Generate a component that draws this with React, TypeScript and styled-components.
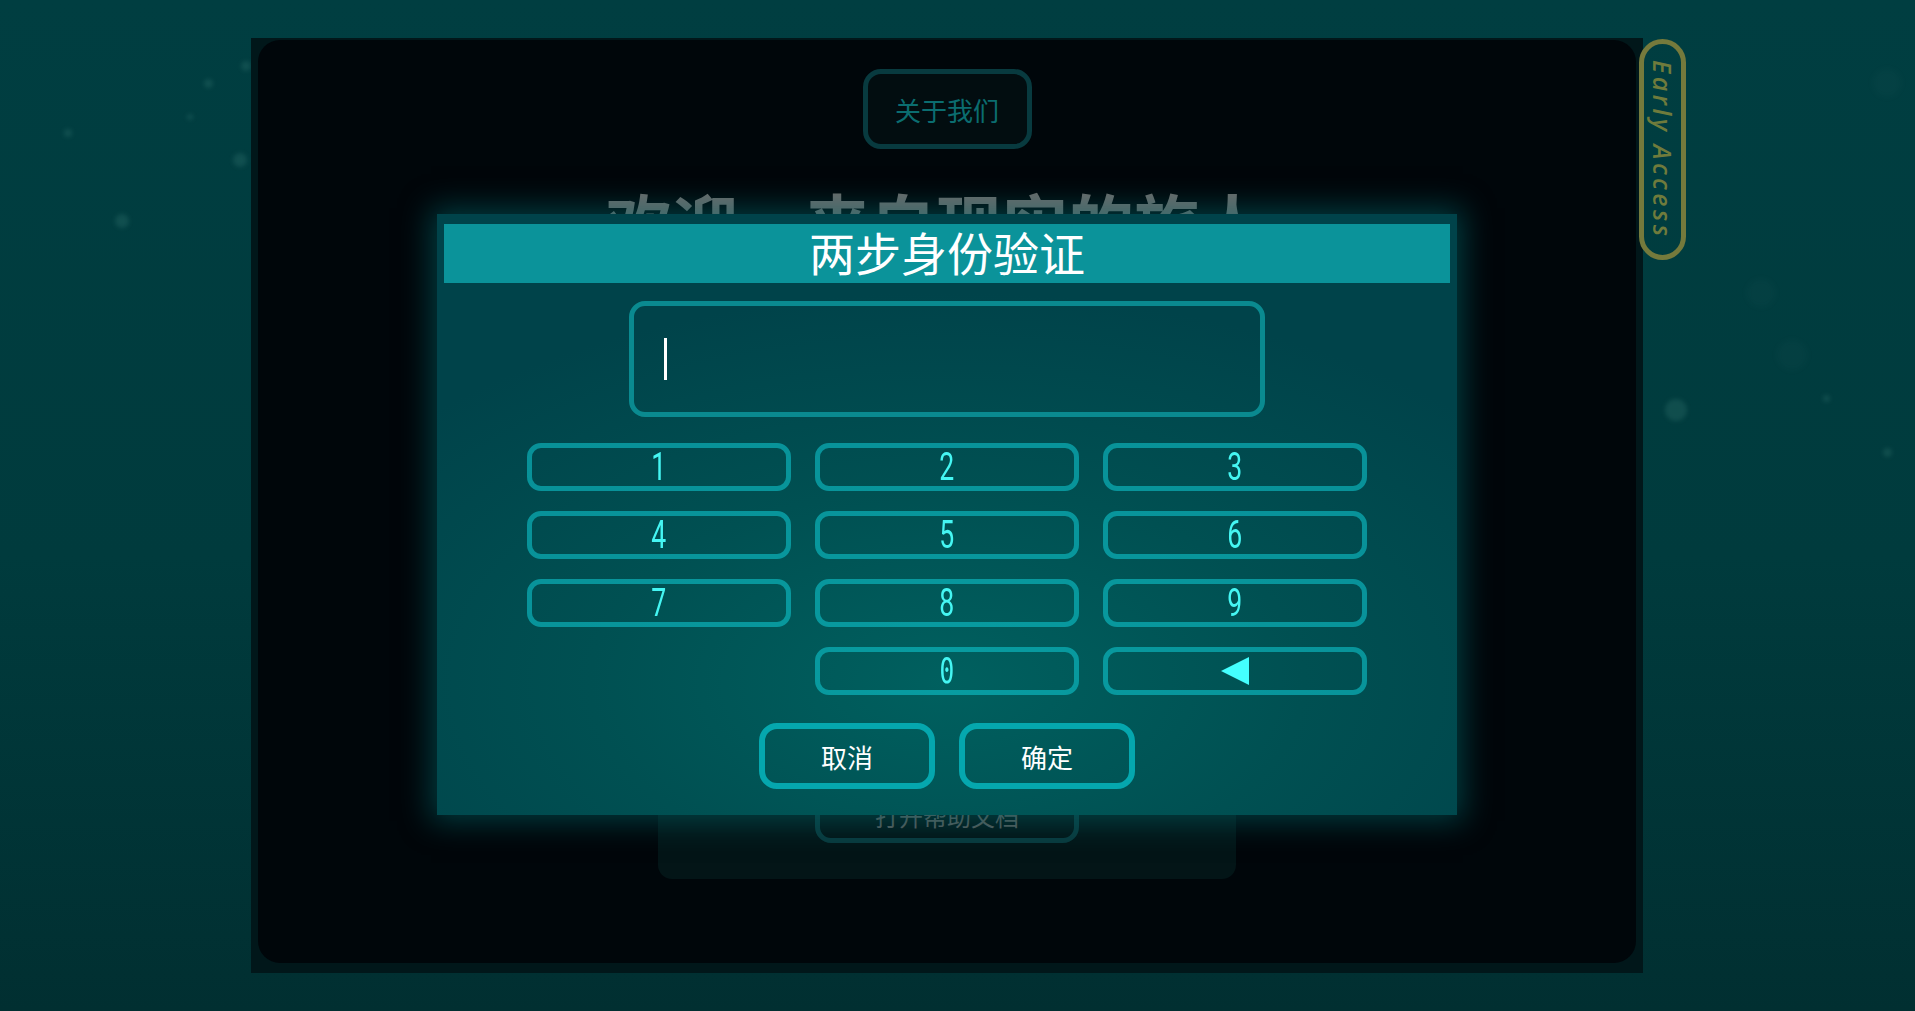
import React, { useState } from "react";
import styled, { createGlobalStyle } from "styled-components";

const GlobalStyle = createGlobalStyle`
  html, body {
    margin: 0;
    padding: 0;
    background: #003c3f;
  }
  * {
    box-sizing: border-box;
  }
`;

const CJK = `"Noto Sans CJK SC", "Noto Sans", sans-serif`;

const Page = styled.div`
  position: relative;
  width: 100vw;
  height: 100vh;
  overflow: hidden;
  display: flex;
  align-items: flex-start;
  padding: 38px 0 0 251px;
  background: linear-gradient(180deg, #003e41 0%, #003b3d 55%, #012f31 100%);
  font-family: ${CJK};
`;

const Bokeh = styled.span<{ $x: number; $y: number; $size: number; $ring?: boolean }>`
  position: absolute;
  left: ${(p) => p.$x - p.$size / 2}px;
  top: ${(p) => p.$y - p.$size / 2}px;
  width: ${(p) => p.$size}px;
  height: ${(p) => p.$size}px;
  border-radius: 50%;
  background: ${(p) => (p.$ring ? "rgba(90, 160, 150, 0.04)" : "rgba(90, 160, 150, 0.18)")};
  filter: blur(${(p) => (p.$ring ? 3 : 2)}px);
`;

const Frame = styled.div`
  position: relative;
  z-index: 1;
  width: 1392px;
  height: 935px;
  padding: 2px 7px 10px;
  background: #01171a;
  display: flex;
`;

const Inner = styled.div`
  position: relative;
  flex: 1;
  display: flex;
  flex-direction: column;
  align-items: center;
  padding-top: 29px;
  background: #00060a;
  border-radius: 22px;
`;

const AboutButton = styled.div`
  width: 169px;
  height: 80px;
  display: flex;
  align-items: center;
  justify-content: center;
  border: 5px solid #083a3f;
  border-radius: 18px;
  background: #020d10;
  color: #0b6d70;
  font-size: 26px;
`;

const Heading = styled.h1`
  margin: 39px 0 0;
  padding-right: 22px;
  font-size: 66px;
  line-height: 66px;
  font-weight: 700;
  color: #6b6b6b;
  letter-spacing: 0;
`;

const HelpPanel = styled.div`
  width: 578px;
  height: 359px;
  margin-top: 266px;
  padding-bottom: 36px;
  display: flex;
  flex-direction: column;
  justify-content: flex-end;
  align-items: center;
  background: #031517;
  border-radius: 14px;
`;

const HelpButton = styled.div`
  width: 264px;
  height: 56px;
  display: flex;
  align-items: center;
  justify-content: center;
  border: 5px solid #093a3e;
  border-radius: 16px;
  color: #595959;
  font-size: 24px;
`;

const Badge = styled.div`
  position: relative;
  z-index: 2;
  width: 47px;
  height: 221px;
  margin: 1px 0 0 -4px;
  display: flex;
  align-items: center;
  justify-content: center;
  border: 5px solid #757a3c;
  border-radius: 24px;
  writing-mode: vertical-rl;
  font-family: "Open Sans", "DejaVu Sans", sans-serif;
  font-style: italic;
  font-weight: 600;
  font-size: 25px;
  letter-spacing: 3.5px;
  color: #6f7b3c;
`;

/* dialog */

const Modal = styled.div`
  position: absolute;
  top: 174px;
  left: 179px;
  width: 1020px;
  height: 601px;
  padding: 10px 7px 0;
  display: flex;
  flex-direction: column;
  align-items: center;
  background: radial-gradient(ellipse 70% 65% at 50% 78%, #00605f 0%, #005052 50%, #00434a 100%);
  box-shadow: 0 0 28px 6px rgba(0, 105, 110, 0.55);
`;

const TitleBar = styled.div`
  align-self: stretch;
  height: 59px;
  padding-bottom: 5px;
  display: flex;
  align-items: center;
  justify-content: center;
  background: #0b939a;
  color: #ffffff;
  font-size: 46px;
  font-weight: 400;
`;

const CodeInput = styled.div`
  width: 636px;
  height: 116px;
  margin-top: 18px;
  padding-left: 30px;
  display: flex;
  align-items: center;
  border: 5px solid #0a8a90;
  border-radius: 16px;
`;

const Caret = styled.span`
  width: 3px;
  height: 42px;
  background: #ffffff;
`;

const Keypad = styled.div`
  margin-top: 26px;
  display: grid;
  grid-template-columns: repeat(3, 264px);
  grid-auto-rows: 48px;
  column-gap: 24px;
  row-gap: 20px;
`;

const Key = styled.button<{ $col?: number }>`
  grid-column: ${(p) => p.$col ?? "auto"};
  display: flex;
  align-items: center;
  justify-content: center;
  padding: 0;
  background: transparent;
  border: 5px solid rgba(14, 205, 215, 0.55);
  border-radius: 14px;
  color: #45f6f3;
  cursor: pointer;
`;

const Digit = styled.span<{ $mono?: boolean }>`
  font-family: ${(p) => (p.$mono ? `"DejaVu Sans Mono", monospace` : `Roboto, "Liberation Sans", sans-serif`)};
  font-weight: 400;
  font-size: ${(p) => (p.$mono ? 36 : 38)}px;
  line-height: 1;
  transform: scaleX(${(p) => (p.$mono ? 0.68 : 0.7)});
`;

const Actions = styled.div`
  margin-top: 28px;
  display: flex;
  gap: 24px;
`;

const ActionButton = styled.button`
  width: 176px;
  height: 66px;
  display: flex;
  align-items: center;
  justify-content: center;
  background: transparent;
  border: 6px solid #05a7ae;
  border-radius: 18px;
  color: #ffffff;
  font-family: ${CJK};
  font-size: 26px;
  font-weight: 400;
  cursor: pointer;
`;

const dots = [
  { x: 208, y: 83, size: 9 },
  { x: 190, y: 117, size: 6 },
  { x: 240, y: 160, size: 14 },
  { x: 122, y: 221, size: 14 },
  { x: 68, y: 133, size: 8 },
  { x: 246, y: 66, size: 10 },
  { x: 1676, y: 410, size: 22 },
  { x: 1826, y: 398, size: 7 },
  { x: 1887, y: 452, size: 9 },
  { x: 1887, y: 83, size: 28, ring: true },
  { x: 1761, y: 293, size: 28, ring: true },
  { x: 1792, y: 355, size: 30, ring: true },
];

export default function App() {
  const [code, setCode] = useState("");

  const press = (d: string) => setCode((c) => (c.length < 6 ? c + d : c));
  const back = () => setCode((c) => c.slice(0, -1));

  return (
    <>
      <GlobalStyle />
      <Page>
        {dots.map((d, i) => (
          <Bokeh key={i} $x={d.x} $y={d.y} $size={d.size} $ring={d.ring} />
        ))}
        <Frame>
          <Inner>
            <AboutButton>关于我们</AboutButton>
            <Heading>欢迎，来自现实的旅人</Heading>
            <HelpPanel>
              <HelpButton>打开帮助文档</HelpButton>
            </HelpPanel>

            <Modal>
              <TitleBar>两步身份验证</TitleBar>
              <CodeInput>
                {code && <span style={{ color: "#fff", fontSize: 40 }}>{code}</span>}
                <Caret />
              </CodeInput>
              <Keypad>
                {["1", "2", "3", "4", "5", "6", "7", "8", "9"].map((d) => (
                  <Key key={d} onClick={() => press(d)}>
                    <Digit>{d}</Digit>
                  </Key>
                ))}
                <Key $col={2} onClick={() => press("0")}>
                  <Digit $mono>0</Digit>
                </Key>
                <Key onClick={back}>
                  <svg width="28" height="28" viewBox="0 0 28 28">
                    <polygon points="0,14 28,0 28,28" fill="#44ffff" />
                  </svg>
                </Key>
              </Keypad>
              <Actions>
                <ActionButton>取消</ActionButton>
                <ActionButton>确定</ActionButton>
              </Actions>
            </Modal>
          </Inner>
        </Frame>
        <Badge>Early Access</Badge>
      </Page>
    </>
  );
}
